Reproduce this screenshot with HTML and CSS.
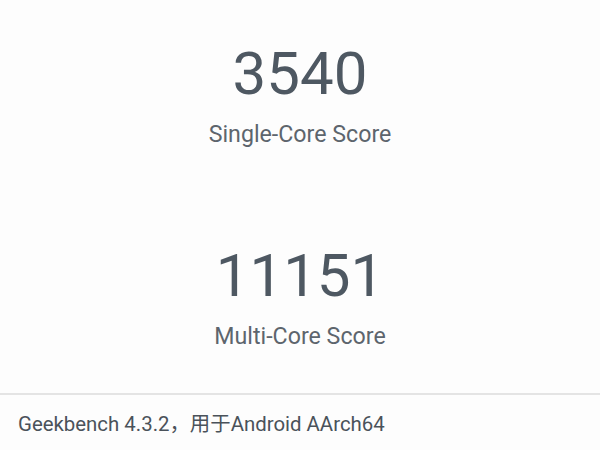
FILE: index.html
```html
<!DOCTYPE html>
<html>
<head>
<meta charset="utf-8">
<link rel="stylesheet" href="styles.css">
</head>
<body>
<main class="scores">
  <section class="score">
    <div class="value">3540</div>
    <div class="label">Single-Core Score</div>
  </section>
  <section class="score">
    <div class="value">11151</div>
    <div class="label">Multi-Core Score</div>
  </section>
</main>
<footer class="footer">Geekbench 4.3.2，用于Android AArch64</footer>
</body>
</html>
```
FILE: styles.css
```css
html, body {
  margin: 0;
  padding: 0;
  background: #fdfdfd;
  font-family: Roboto, "Noto Sans CJK SC", sans-serif;
}
.scores {
  height: 395px;
  box-sizing: border-box;
  padding-top: 44px;
  display: flex;
  flex-direction: column;
  align-items: center;
  gap: 100px;
  border-bottom: 2px solid #e4e4e4;
}
.score {
  display: flex;
  flex-direction: column;
  align-items: center;
  gap: 19px;
}
.value {
  font-size: 60px;
  line-height: 1;
  color: #4e5862;
}
.label {
  font-size: 23.2px;
  line-height: 1;
  color: #5d656d;
}
.footer {
  padding: 19px 0 0 18px;
  font-size: 20.4px;
  line-height: 1;
  color: #4a525a;
}
```
